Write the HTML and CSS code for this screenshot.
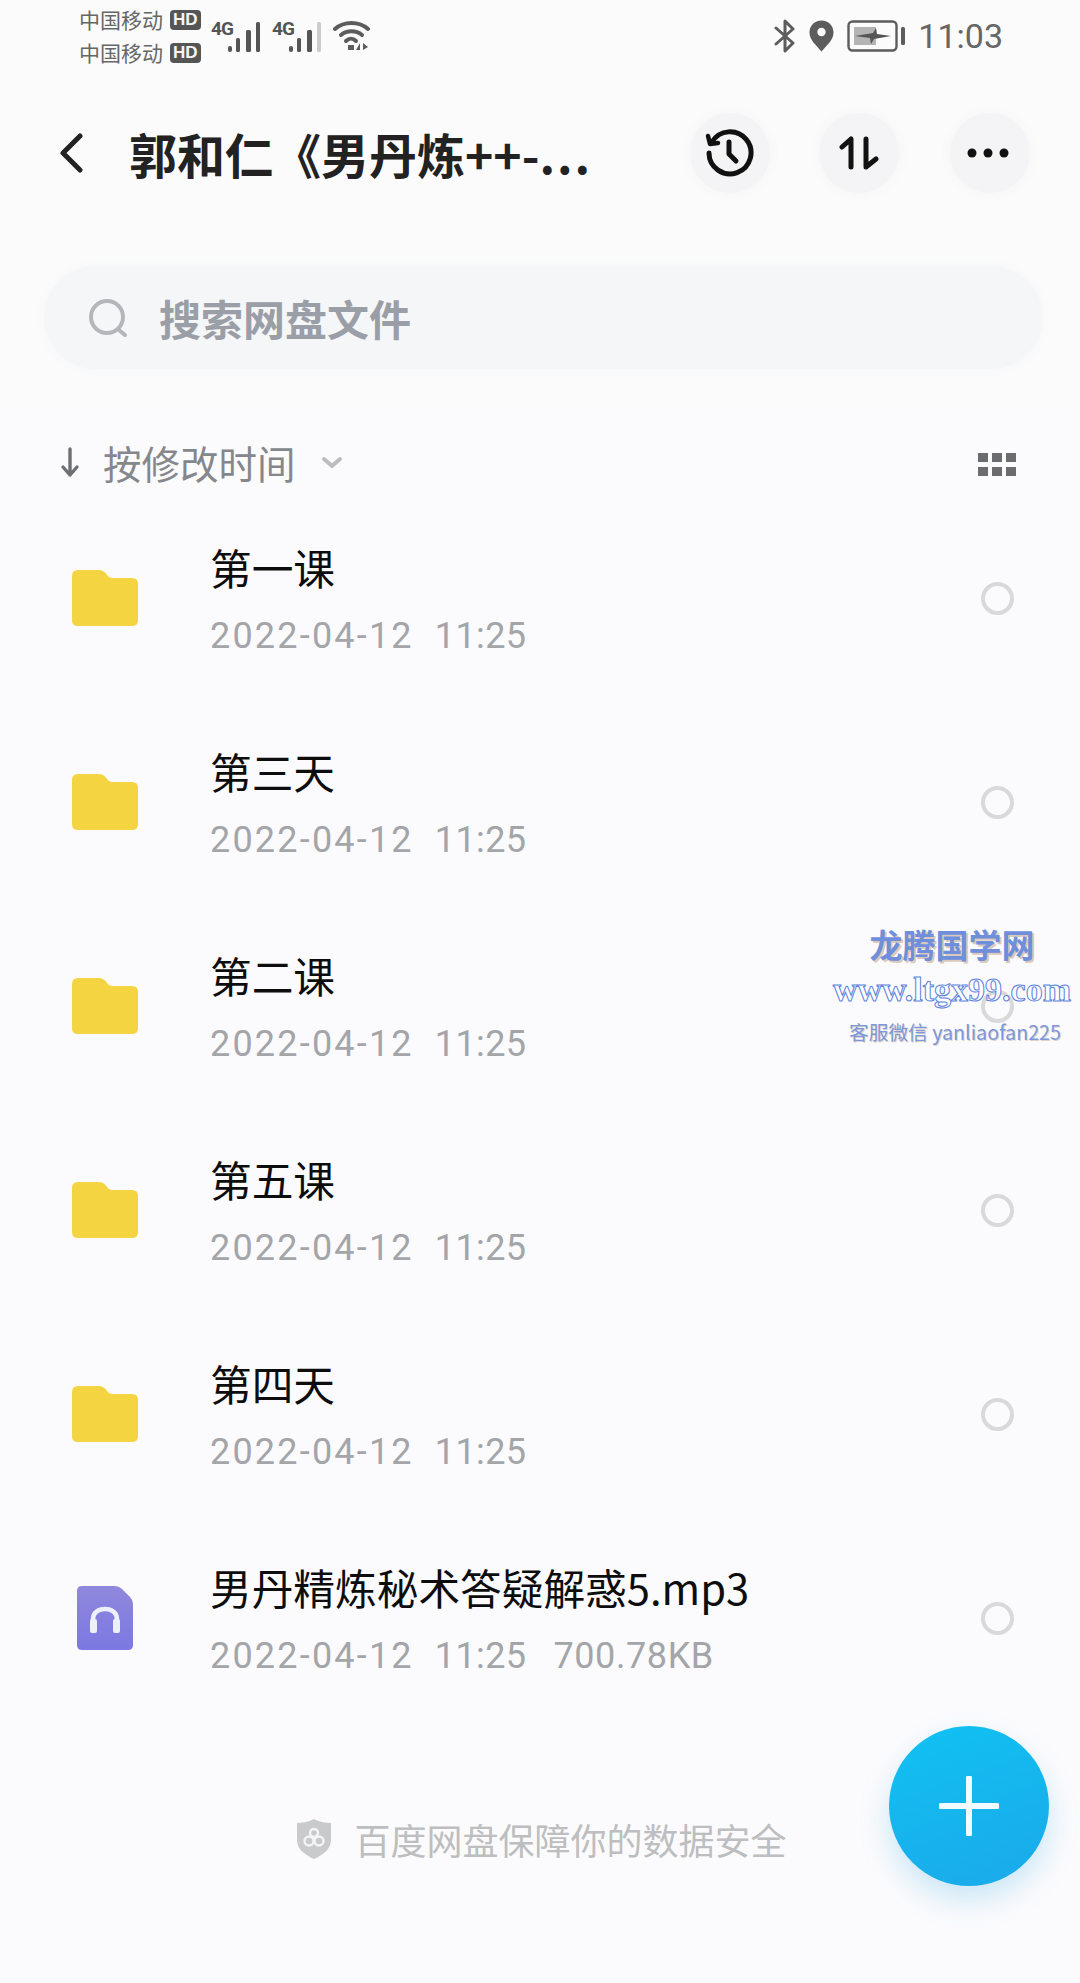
FILE: index.html
```html
<!DOCTYPE html>
<html lang="zh-CN">

<head>
    <meta charset="UTF-8">
    <meta name="viewport" content="width=device-width, initial-scale=1.0">
    <title>网盘文件</title>
    <link rel="stylesheet" href="styles.css">
</head>

<body>
    <div class="page">
        <div class="statusBar">
            <div class="carriers">
                <div class="carrier">中国移动<span class="hdBadge">HD</span></div>
                <div class="carrier">中国移动<span class="hdBadge">HD</span></div>
            </div>
            <div class="signal">
                <span class="netType">4G</span>
                <svg width="33" height="32" viewBox="0 0 33 32" fill="#555">
                    <rect x="0" y="25" width="4" height="6" rx="2"/>
                    <rect x="8" y="17" width="4" height="14" rx="1.5"/>
                    <rect x="18" y="9" width="5" height="22" rx="1.5"/>
                    <rect x="28" y="1" width="4" height="30" rx="1.5"/>
                </svg>
            </div>
            <div class="signal">
                <span class="netType">4G</span>
                <svg width="33" height="32" viewBox="0 0 33 32" fill="#555">
                    <rect x="0" y="25" width="4" height="6" rx="2"/>
                    <rect x="8" y="17" width="4" height="14" rx="1.5"/>
                    <rect x="18" y="9" width="5" height="22" rx="1.5"/>
                    <rect x="28" y="1" width="4" height="30" fill="#ccc" rx="1.5"/>
                </svg>
            </div>
            <svg class="wifi" width="38" height="32" viewBox="0 0 38 32" fill="none" stroke="#5c5c5c" stroke-width="4" stroke-linecap="round">
                <path d="M2 9C11 1 26 1 35 9"/>
                <path d="M8 15C14 10 23 10 29 15"/>
                <path d="M13 21C16 18 20 18 23 21"/>
                <rect x="15" y="25" width="6" height="5" fill="#5c5c5c" stroke="none"/>
                <path d="M27 23L23 30H27ZM30 23L35 27L30 30Z" fill="#5c5c5c" stroke="none"/>
            </svg>
            <div class="statusRight">
                <svg width="22" height="34" viewBox="0 0 22 34" fill="none" stroke="#5c5c5c" stroke-width="3" stroke-linejoin="round" stroke-linecap="round">
                    <path d="M2 9L19 24L11 32V2L19 10L2 25"/>
                </svg>
                <svg width="25" height="32" viewBox="0 0 25 32">
                    <path d="M12.5 0.5C5.5 0.5 0.5 5.5 0.5 12.5C0.5 20 7 25 12.5 31.5C18 25 24.5 20 24.5 12.5C24.5 5.5 19.5 0.5 12.5 0.5Z" fill="#5c5c5c"/>
                    <circle cx="12.5" cy="12" r="4.2" fill="#fbfbfb"/>
                </svg>
                <svg width="58" height="32" viewBox="0 0 58 32">
                    <rect x="1.5" y="1.5" width="48" height="29" rx="4" fill="none" stroke="#5c5c5c" stroke-width="2.4"/>
                    <rect x="7" y="7" width="22" height="18" fill="#b4b4b4"/>
                    <path d="M8 16L26 13L29 8L30 14L44 16L27 19L24 24L23 18Z" fill="#555"/>
                    <rect x="54" y="7" width="4" height="18" rx="1.5" fill="#5c5c5c"/>
                </svg>
                <span class="clock">11:03</span>
            </div>
        </div>

        <div class="header">
            <svg class="backIcon" width="26" height="40" viewBox="0 0 26 40" fill="none" stroke="#222" stroke-width="5" stroke-linecap="round" stroke-linejoin="round">
                <path d="M22 3L5 20L22 37"/>
            </svg>
            <div class="pageTitle">郭和仁《男丹炼++-<span class="titleDots">...</span></div>
            <div class="roundBtn btnHistory">
                <svg width="50" height="50" viewBox="0 0 50 50" fill="none" stroke="#111" stroke-width="5" stroke-linecap="round" stroke-linejoin="round">
                    <path d="M7 14A21 21 0 1 1 4 25"/>
                    <path d="M3 8L5 16L13 15" stroke-width="4.5"/>
                    <path d="M24 14V26L31 33"/>
                </svg>
            </div>
            <div class="roundBtn btnSwap">
                <svg width="40" height="34" viewBox="0 0 40 34" fill="none" stroke="#111" stroke-width="5" stroke-linecap="round" stroke-linejoin="round">
                    <path d="M3 11L12 3V31"/>
                    <path d="M27 3V31L37 23"/>
                </svg>
            </div>
            <div class="roundBtn btnMore">
                <svg width="44" height="12" viewBox="0 0 44 12" fill="#111">
                    <circle cx="6" cy="6" r="4.5"/>
                    <circle cx="22" cy="6" r="4.5"/>
                    <circle cx="38" cy="6" r="4.5"/>
                </svg>
            </div>
        </div>

        <div class="searchBox">
            <svg width="42" height="42" viewBox="0 0 42 42" fill="none" stroke="#b4b6ba" stroke-width="4" stroke-linecap="round">
                <circle cx="20" cy="20" r="16"/>
                <path d="M32 33L38 38"/>
            </svg>
            <span class="searchText">搜索网盘文件</span>
        </div>

        <div class="sortRow">
            <svg class="sortArrow" width="20" height="32" viewBox="0 0 20 32" fill="none" stroke="#6d6f73" stroke-width="3.4" stroke-linecap="round" stroke-linejoin="round">
                <path d="M10 3V29M3 21L10 29L17 21"/>
            </svg>
            <span class="sortText">按修改时间</span>
            <svg class="sortChevron" width="22" height="14" viewBox="0 0 22 14" fill="none" stroke="#bcbdc0" stroke-width="4" stroke-linecap="round" stroke-linejoin="round">
                <path d="M3 3L11 10L19 3"/>
            </svg>
            <div class="gridIcon">
                <span></span><span></span><span></span><span></span><span></span><span></span>
            </div>
        </div>

        <div class="fileList">
            <div class="fileRow">
                <svg class="fileIcon" width="66" height="56" viewBox="0 0 66 56"><path d="M0 6Q0 0 6 0H26Q32 0 35 5Q37 8 41 8H60Q66 8 66 14V50Q66 56 60 56H6Q0 56 0 50Z" fill="#f5d442"/></svg>
                <div class="fileInfo">
                    <div class="fileName">第一课</div>
                    <div class="fileMeta"><span class="metaDate">2022-04-12</span><span class="metaTime">11:25</span></div>
                </div>
                <span class="radio"></span>
            </div>
            <div class="fileRow">
                <svg class="fileIcon" width="66" height="56" viewBox="0 0 66 56"><path d="M0 6Q0 0 6 0H26Q32 0 35 5Q37 8 41 8H60Q66 8 66 14V50Q66 56 60 56H6Q0 56 0 50Z" fill="#f5d442"/></svg>
                <div class="fileInfo">
                    <div class="fileName">第三天</div>
                    <div class="fileMeta"><span class="metaDate">2022-04-12</span><span class="metaTime">11:25</span></div>
                </div>
                <span class="radio"></span>
            </div>
            <div class="fileRow">
                <svg class="fileIcon" width="66" height="56" viewBox="0 0 66 56"><path d="M0 6Q0 0 6 0H26Q32 0 35 5Q37 8 41 8H60Q66 8 66 14V50Q66 56 60 56H6Q0 56 0 50Z" fill="#f5d442"/></svg>
                <div class="fileInfo">
                    <div class="fileName">第二课</div>
                    <div class="fileMeta"><span class="metaDate">2022-04-12</span><span class="metaTime">11:25</span></div>
                </div>
                <span class="radio"></span>
            </div>
            <div class="fileRow">
                <svg class="fileIcon" width="66" height="56" viewBox="0 0 66 56"><path d="M0 6Q0 0 6 0H26Q32 0 35 5Q37 8 41 8H60Q66 8 66 14V50Q66 56 60 56H6Q0 56 0 50Z" fill="#f5d442"/></svg>
                <div class="fileInfo">
                    <div class="fileName">第五课</div>
                    <div class="fileMeta"><span class="metaDate">2022-04-12</span><span class="metaTime">11:25</span></div>
                </div>
                <span class="radio"></span>
            </div>
            <div class="fileRow">
                <svg class="fileIcon" width="66" height="56" viewBox="0 0 66 56"><path d="M0 6Q0 0 6 0H26Q32 0 35 5Q37 8 41 8H60Q66 8 66 14V50Q66 56 60 56H6Q0 56 0 50Z" fill="#f5d442"/></svg>
                <div class="fileInfo">
                    <div class="fileName">第四天</div>
                    <div class="fileMeta"><span class="metaDate">2022-04-12</span><span class="metaTime">11:25</span></div>
                </div>
                <span class="radio"></span>
            </div>
            <div class="fileRow">
                <svg class="fileIcon" width="66" height="64" viewBox="0 0 66 64">
                    <defs>
                        <linearGradient id="audioFill" x1="0" y1="0" x2="0" y2="1">
                            <stop offset="0" stop-color="#8f88dc"/>
                            <stop offset="1" stop-color="#7b78e2"/>
                        </linearGradient>
                    </defs>
                    <path d="M5 5Q5 0 10 0H43Q47 0 50 3L58 11Q61 14 61 18V59Q61 64 56 64H10Q5 64 5 59Z" fill="url(#audioFill)"/>
                    <path d="M21 42V33C21 27 26 23 33 23C40 23 45 27 45 33V42" fill="none" stroke="#eef0fb" stroke-width="4.5"/>
                    <rect x="18" y="33" width="7" height="14" rx="2" fill="#eef0fb"/>
                    <rect x="41" y="33" width="7" height="14" rx="2" fill="#eef0fb"/>
                </svg>
                <div class="fileInfo">
                    <div class="fileName">男丹精炼秘术答疑解惑5.mp3</div>
                    <div class="fileMeta"><span class="metaDate">2022-04-12</span><span class="metaTime">11:25</span><span class="metaSize">700.78KB</span></div>
                </div>
                <span class="radio"></span>
            </div>
        </div>

        <div class="safeNote">
            <svg width="36" height="42" viewBox="0 0 36 42">
                <path d="M18 1C12 4 6 5 1 5V22C1 31 9 37 18 41C27 37 35 31 35 22V5C30 5 24 4 18 1Z" fill="#c9cacc"/>
                <circle cx="13" cy="23" r="4.5" fill="none" stroke="#f5f5f6" stroke-width="2.4"/>
                <circle cx="23" cy="23" r="4.5" fill="none" stroke="#f5f5f6" stroke-width="2.4"/>
                <circle cx="18" cy="15" r="4" fill="none" stroke="#f5f5f6" stroke-width="2.4"/>
            </svg>
            <span>百度网盘保障你的数据安全</span>
        </div>

        <div class="fab">
            <svg width="60" height="60" viewBox="0 0 60 60" fill="none" stroke="#f2fbff" stroke-width="6" stroke-linecap="round">
                <path d="M30 2V58M2 30H58"/>
            </svg>
        </div>

        <div class="watermark">
            <div class="wmName">龙腾国学网</div>
            <div class="wmUrl">www.ltgx99.com</div>
            <div class="wmContact">客服微信 yanliaofan225</div>
        </div>
    </div>
</body>

</html>
```

FILE: styles.css
```css
html, body {
    margin: 0;
    padding: 0;
}

body {
    background-color: #fbfbfd;
    font-family: "Noto Sans CJK SC", "Liberation Sans", sans-serif;
}

.page {
    position: relative;
    width: 1080px;
    height: 1983px;
    overflow: hidden;
    background: linear-gradient(#fbfbfb, #fbfbfd 30%);
}

/* status bar */
.statusBar {
    height: 75px;
    display: flex;
    align-items: flex-start;
    padding-left: 79px;
    padding-right: 77px;
    color: #5c5c5c;
}

.carriers {
    width: 132px;
    padding-top: 3px;
}

.carrier {
    height: 33px;
    display: flex;
    align-items: center;
    font-size: 21px;
    line-height: 33px;
    color: #666;
}

.hdBadge {
    margin-left: 7px;
    padding: 0 3px;
    height: 20px;
    line-height: 20px;
    font-family: "Liberation Sans", sans-serif;
    font-size: 17px;
    font-weight: bold;
    color: #f5f5f5;
    background-color: #555;
    border-radius: 4px;
}

.signal {
    width: 61px;
    height: 52px;
    padding-top: 20px;
    box-sizing: border-box;
    display: flex;
    align-items: flex-start;
}

.netType {
    width: 17px;
    font-family: "Roboto", sans-serif;
    font-size: 19px;
    line-height: 17px;
    letter-spacing: -1px;
    font-weight: bold;
    color: #555;
}

.signal svg {
    margin-top: 1px;
}

.wifi {
    margin-top: 20px;
}

.statusRight {
    margin-left: auto;
    padding-top: 18px;
    display: flex;
    align-items: center;
    gap: 13px;
}

.clock {
    font-family: "Roboto", sans-serif;
    font-size: 34px;
    line-height: 36px;
    color: #666;
}

/* header */
.header {
    height: 156px;
    display: flex;
    align-items: center;
    padding-left: 58px;
}

.backIcon {
    flex: none;
}

.pageTitle {
    margin-left: 45px;
    font-size: 48px;
    line-height: 60px;
    font-weight: bold;
    color: #222;
    white-space: nowrap;
}

.titleDots {
    letter-spacing: 2px;
}

.roundBtn {
    width: 80px;
    height: 80px;
    border-radius: 50%;
    background-color: #f4f4f6;
    box-shadow: 0 0 8px 3px #f7f7f8;
    display: flex;
    align-items: center;
    justify-content: center;
    flex: none;
}

.btnHistory {
    margin-left: auto;
}

.btnSwap {
    margin-left: 49px;
}

.btnMore {
    margin-left: 51px;
    margin-right: 50px;
    padding-right: 4px;
    box-sizing: border-box;
}

/* search */
.searchBox {
    margin: 35px 37px 0 44px;
    height: 103px;
    border-radius: 52px;
    background-color: #f5f6f8;
    box-shadow: 0 0 10px 2px #f7f8f9;
    display: flex;
    align-items: center;
    padding-left: 43px;
    gap: 30px;
}

.searchText {
    font-size: 42px;
    font-weight: bold;
    color: #9a9ea6;
}

/* sort row */
.sortRow {
    height: 127px;
    box-sizing: border-box;
    padding: 58px 64px 0 60px;
    display: flex;
    align-items: center;
}

.sortRow > * {
    flex: none;
}

.sortText {
    margin-left: 23px;
    font-size: 38.5px;
    color: #85878c;
}

.sortChevron {
    margin-left: 25px;
    margin-top: 3px;
}

.gridIcon {
    margin-left: auto;
    margin-top: 6px;
    display: grid;
    grid-template-columns: repeat(3, 10px);
    grid-auto-rows: 9px;
    gap: 5px 4px;
}

.gridIcon span {
    background-color: #6b6c70;
}

/* file list */
.fileRow {
    height: 204px;
    display: flex;
    align-items: center;
    padding-left: 72px;
    padding-right: 66px;
}

.fileIcon {
    flex: none;
}

.fileInfo {
    margin-left: 72px;
    flex: 1;
}

.fileName {
    font-size: 41.7px;
    line-height: 56px;
    color: #0d0d0d;
    white-space: nowrap;
}

.fileMeta {
    margin-top: 19px;
    font-family: "Roboto", sans-serif;
    font-size: 36px;
    line-height: 44px;
    color: #a3a5a9;
    white-space: nowrap;
}

.metaDate {
    letter-spacing: 2.2px;
}

.metaTime {
    margin-left: 21px;
    letter-spacing: 0.4px;
}

.metaSize {
    margin-left: 27px;
    letter-spacing: 0.6px;
}

.radio {
    width: 25px;
    height: 25px;
    flex: none;
    border: 4px solid #d9d9da;
    border-radius: 50%;
}

/* footer note */
.safeNote {
    margin-top: 97px;
    display: flex;
    align-items: center;
    justify-content: center;
    gap: 22px;
    padding-left: 3px;
    font-size: 36px;
    line-height: 44px;
    color: #bdbec0;
}

/* floating button */
.fab {
    position: absolute;
    left: 889px;
    top: 1726px;
    width: 160px;
    height: 160px;
    border-radius: 50%;
    background: linear-gradient(160deg, #10c2f2, #1ba8ea);
    box-shadow: 0 14px 30px rgba(30, 160, 225, 0.22);
    display: flex;
    align-items: center;
    justify-content: center;
}

/* watermark over the list */
.watermark {
    position: absolute;
    left: 827px;
    top: 923px;
    width: 250px;
    text-align: center;
    white-space: nowrap;
}

.wmName {
    font-size: 33px;
    line-height: 42px;
    font-weight: bold;
    color: #6f8fdc;
    text-shadow: 2px 2px 0 #dcc9bb;
}

.wmUrl {
    margin-top: 5px;
    font-family: "Liberation Serif", serif;
    font-size: 34px;
    line-height: 40px;
    font-weight: bold;
    color: #fff;
    -webkit-text-stroke: 1px #5c7fdc;
}

.wmContact {
    margin-top: 8px;
    padding-left: 6px;
    font-size: 19.7px;
    line-height: 28px;
    color: #7c97dc;
    text-shadow: 1px 1px 0 #e0d2c6;
}
```
